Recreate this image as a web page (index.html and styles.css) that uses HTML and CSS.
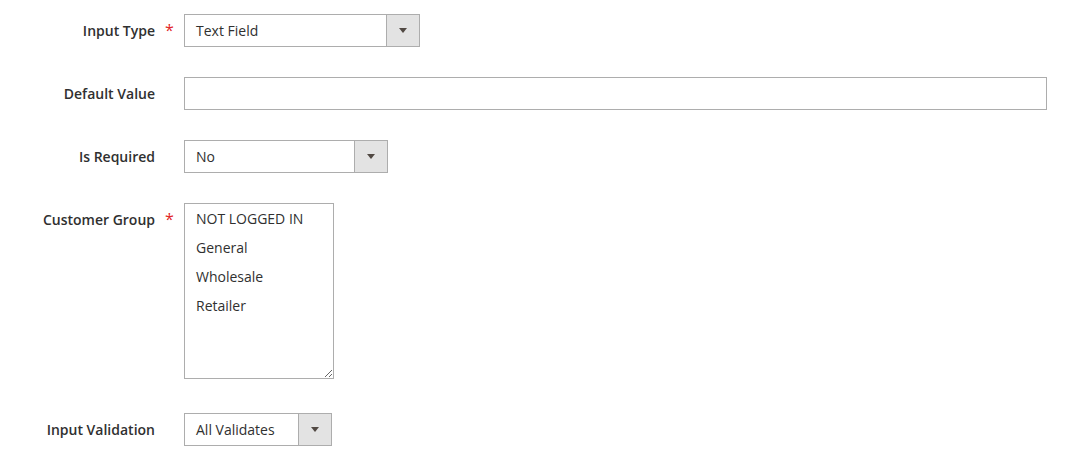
FILE: index.html
```html
<!DOCTYPE html>
<html>
<head>
<meta charset="utf-8">
<link rel="stylesheet" href="styles.css">
</head>
<body>
<div class="form">
  <div class="row">
    <div class="label">Input Type</div>
    <div class="req"><span class="star">*</span></div>
    <div class="select w-type">
      <div class="value">Text Field</div>
      <div class="btn"><span class="tri"></span></div>
    </div>
  </div>
  <div class="row">
    <div class="label">Default Value</div>
    <div class="req"></div>
    <div class="input"></div>
  </div>
  <div class="row">
    <div class="label">Is Required</div>
    <div class="req"></div>
    <div class="select w-req">
      <div class="value">No</div>
      <div class="btn"><span class="tri"></span></div>
    </div>
  </div>
  <div class="row row-multi">
    <div class="label">Customer Group</div>
    <div class="req"><span class="star">*</span></div>
    <div class="multi">
      <div class="opt">NOT LOGGED IN</div>
      <div class="opt">General</div>
      <div class="opt">Wholesale</div>
      <div class="opt">Retailer</div>
    </div>
  </div>
  <div class="row">
    <div class="label">Input Validation</div>
    <div class="req"></div>
    <div class="select w-val">
      <div class="value">All Validates</div>
      <div class="btn"><span class="tri"></span></div>
    </div>
  </div>
</div>
</body>
</html>
```
FILE: styles.css
```css
html, body {
  margin: 0;
  padding: 0;
  background: #ffffff;
}
body {
  font-family: "Open Sans", "Noto Sans", sans-serif;
  font-size: 14px;
  color: #303030;
}
.form {
  padding-top: 14px;
}
.row {
  display: flex;
  align-items: flex-start;
  margin-bottom: 30px;
}
.row-multi {
  margin-bottom: 34px;
}
.label {
  width: 155px;
  text-align: right;
  font-weight: 600;
  line-height: 33px;
  color: #303030;
}
.req {
  width: 29px;
  box-sizing: border-box;
  padding-left: 10px;
  line-height: 33px;
}
.star {
  color: #e22626;
  font-size: 16px;
}
.select {
  display: flex;
  height: 33px;
  box-sizing: border-box;
  border: 1px solid #adadad;
  background: #fff;
}
.w-type { width: 236px; }
.w-req { width: 204px; }
.w-val { width: 148px; }
.value {
  flex: 1;
  padding-left: 11px;
  line-height: 31px;
  white-space: nowrap;
}
.btn {
  width: 33px;
  box-sizing: border-box;
  border-left: 1px solid #adadad;
  background: #e3e3e3;
  display: flex;
  align-items: center;
  justify-content: center;
}
.tri {
  width: 0;
  height: 0;
  border-left: 4px solid transparent;
  border-right: 4px solid transparent;
  border-top: 5px solid #514943;
}
.input {
  width: 863px;
  height: 33px;
  box-sizing: border-box;
  border: 1px solid #adadad;
}
.multi {
  width: 150px;
  height: 176px;
  box-sizing: border-box;
  border: 1px solid #adadad;
  overflow: auto;
  resize: vertical;
}
.opt {
  padding-left: 11px;
  line-height: 29px;
  white-space: nowrap;
}
```
